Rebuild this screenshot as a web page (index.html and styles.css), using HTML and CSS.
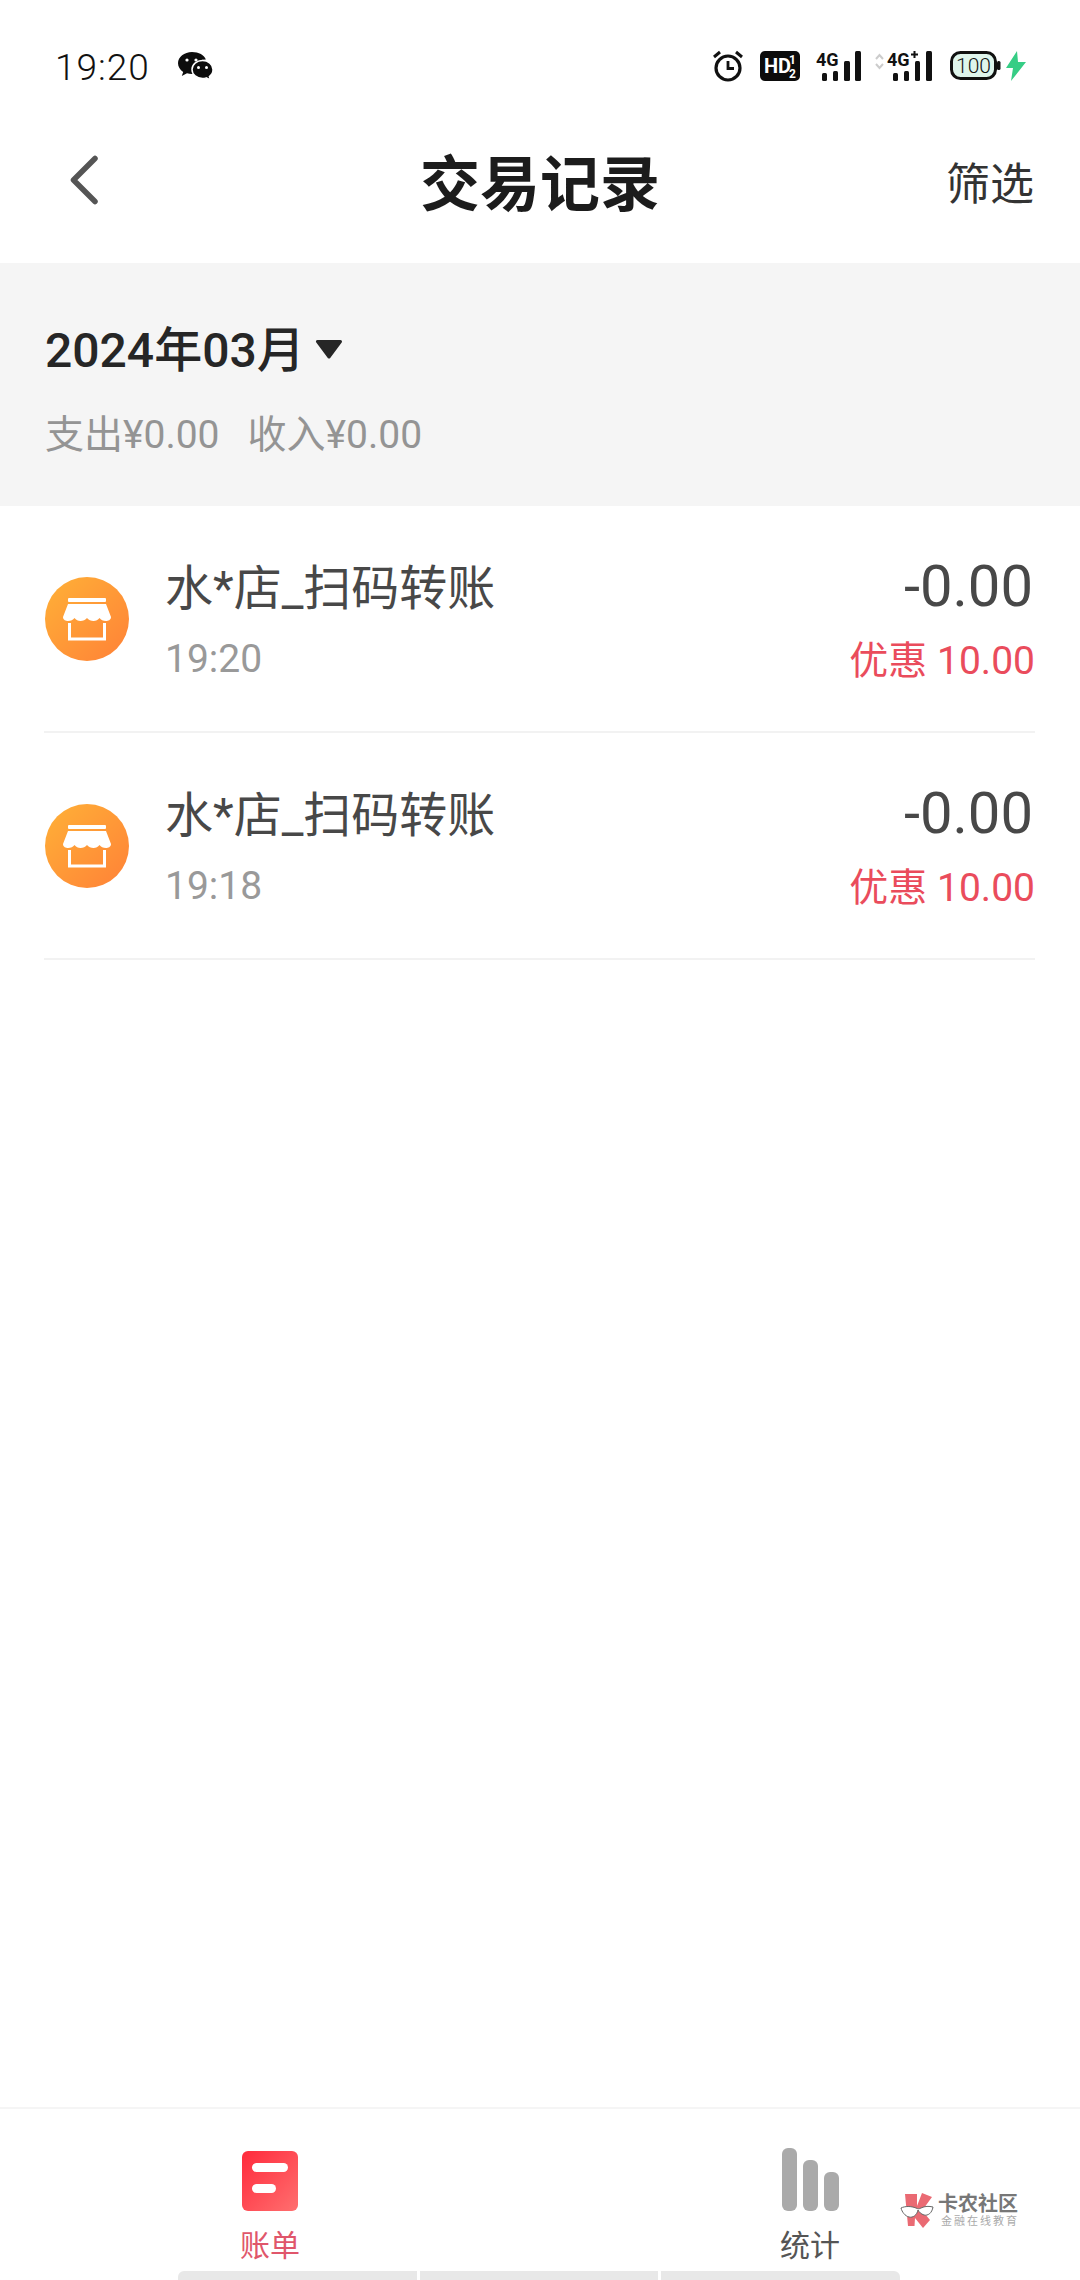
FILE: index.html
```html
<!DOCTYPE html>
<html lang="zh-CN">
<head>
  <meta charset="UTF-8">
  <meta name="viewport" content="width=device-width, initial-scale=1.0">
  <title>交易记录</title>
  <link rel="stylesheet" href="styles.css">
</head>
<body>
  <div class="page">
    <div class="status-bar">
      <div class="status-left">
        <span class="clock">19:20</span>
        <svg class="wechat" width="35" height="28" viewBox="0 0 35 28">
          <path d="M14 0C6.3 0 0 5 0 11.2c0 3.5 2 6.600 5.200 8.700L3.800 24l5.200-2.700c1.600.4 3.300.6 5 .6.500 0 1 0 1.500-.1-.4-1.200-.6-2.400-.6-3.700 0-5.900 5.500-10.600 12.200-10.600h.8C26.400 3 20.700 0 14 0z"/>
          <path d="M35 17.500c0-5-4.700-9-10.500-9S14 12.500 14 17.500s4.700 9 10.500 9c1.300 0 2.500-.2 3.700-.6l4.300 2.100-1.100-3.500c2.200-1.600 3.600-4 3.600-6.500z" stroke="#fff" stroke-width="1.500"/>
          <circle cx="9" cy="8" r="1.600" fill="#fff"/><circle cx="18" cy="8" r="1.600" fill="#fff"/>
          <circle cx="20.500" cy="15.500" r="1.500" fill="#fff"/><circle cx="28.500" cy="15.500" r="1.500" fill="#fff"/>
        </svg>
      </div>
      <div class="status-right">
        <svg class="alarm" width="32" height="32" viewBox="0 0 32 32" fill="none" stroke="#111">
          <circle cx="16" cy="18" r="12" stroke-width="3.200"/>
          <path d="M16 11v7.500h6" stroke-width="2.800"/>
          <path d="M2 7l6-5M30 7l-6-5" stroke-width="3"/>
        </svg>
        <svg width="40" height="30" viewBox="0 0 40 30">
          <rect width="40" height="30" rx="5" fill="#0c0c0c"/>
          <text x="4" y="22" class="hd-text">HD</text>
          <text x="29" y="13" class="hd-frac">1</text>
          <text x="29" y="27" class="hd-frac">2</text>
        </svg>
        <svg class="signal" width="46" height="34" viewBox="0 -4 46 34">
          <text x="0" y="15" class="net-text">4G</text>
          <rect x="6" y="22" width="5" height="8" rx="1.500"/><rect x="17" y="20" width="5" height="10" rx="1.500"/>
          <rect x="28" y="10" width="6" height="20" rx="1.500"/><rect x="39" y="0" width="6" height="30" rx="1.500"/>
        </svg>
        <svg class="signal signal-plus" width="58" height="34" viewBox="0 -4 58 34">
          <path d="M2 8l3.500-4 3.500 4M2 13l3.500 4 3.500-4" fill="none" stroke="#ccc" stroke-width="2"/>
          <text x="13" y="15" class="net-text">4G</text>
          <path d="M40.500 0v7M37 3.500h7" stroke="#111" stroke-width="2"/>
          <rect x="19" y="22" width="5" height="8" rx="1.500"/><rect x="30" y="20" width="5" height="10" rx="1.500"/>
          <rect x="41" y="10" width="5" height="20" rx="1.500"/><rect x="52" y="0" width="6" height="30" rx="1.500"/>
        </svg>
        <div class="battery-group">
          <svg width="51" height="30" viewBox="0 0 51 30">
            <rect x="1.500" y="1.500" width="44" height="26" rx="9" fill="#dff5ec" stroke="#111" stroke-width="3"/>
            <rect x="47" y="10" width="3.500" height="9" rx="1.500" fill="#111"/>
            <text x="23.500" y="22" class="batt-text">100</text>
          </svg>
          <svg width="20" height="30" viewBox="0 0 20 30">
            <path d="M11 0L0 17h7l-2 13L20 11h-8z" fill="#36cd85"/>
          </svg>
        </div>
      </div>
    </div>

    <header class="nav">
      <svg class="back" width="34" height="54" viewBox="0 0 34 54" fill="none">
        <path d="M27 5.500L5.500 27 27 48.500" stroke="#555" stroke-width="5.500" stroke-linecap="round" stroke-linejoin="round"/>
      </svg>
      <h1 class="nav-title">交易记录</h1>
      <span class="nav-action">筛选</span>
    </header>

    <section class="summary">
      <div class="month">2024年03月<svg class="month-caret" width="28" height="19" viewBox="0 0 28 19"><path d="M2.500 1.500h23L14 17z" fill="#262626" stroke="#262626" stroke-width="3" stroke-linejoin="round"/></svg></div>
      <div class="totals"><span>支出¥0.00</span><span>收入¥0.00</span></div>
    </section>

    <main class="list">
      <div class="row">
        <svg class="store" width="84" height="84" viewBox="0 0 84 84">
          <defs>
            <linearGradient id="storeBg" x1="0" y1="0" x2="1" y2="1">
              <stop offset="0" stop-color="#ffb137"/>
              <stop offset="1" stop-color="#ff8137"/>
            </linearGradient>
          </defs>
          <circle cx="42" cy="42" r="42" fill="url(#storeBg)"/>
          <rect x="23" y="21" width="38" height="4" rx="1" fill="#fff"/>
          <path d="M23 27h38l5 13c0 3-3 4-5 4-3 0-5-1-6.500-3-1.500 2-3.500 3-6 3s-5-1-6.500-3c-1.500 2-4 3-6.500 3s-4.500-1-6-3c-1.500 2-3.500 3-6.500 3-2 0-5-1-5-4z" fill="#fff"/>
          <path d="M24.500 46v16h35V46" fill="none" stroke="#fff" stroke-width="3"/>
        </svg>
        <div class="row-main">
          <div class="row-name">水*店_扫码转账</div>
          <div class="row-time">19:20</div>
        </div>
        <div class="row-side">
          <div class="row-amount">-0.00</div>
          <div class="row-discount">优惠 10.00</div>
        </div>
      </div>
      <div class="row">
        <svg class="store" width="84" height="84" viewBox="0 0 84 84">
          <circle cx="42" cy="42" r="42" fill="url(#storeBg)"/>
          <rect x="23" y="21" width="38" height="4" rx="1" fill="#fff"/>
          <path d="M23 27h38l5 13c0 3-3 4-5 4-3 0-5-1-6.500-3-1.500 2-3.500 3-6 3s-5-1-6.500-3c-1.500 2-4 3-6.500 3s-4.500-1-6-3c-1.500 2-3.500 3-6.500 3-2 0-5-1-5-4z" fill="#fff"/>
          <path d="M24.500 46v16h35V46" fill="none" stroke="#fff" stroke-width="3"/>
        </svg>
        <div class="row-main">
          <div class="row-name">水*店_扫码转账</div>
          <div class="row-time">19:18</div>
        </div>
        <div class="row-side">
          <div class="row-amount">-0.00</div>
          <div class="row-discount">优惠 10.00</div>
        </div>
      </div>
    </main>

    <footer class="tabbar">
      <div class="tabs">
        <div class="tab tab-active">
          <svg width="56" height="60" viewBox="0 0 56 60">
            <defs>
              <linearGradient id="billBg" x1="0" y1="0" x2="1" y2="1">
                <stop offset="0" stop-color="#ff2a3c"/>
                <stop offset="1" stop-color="#ff6f6f"/>
              </linearGradient>
            </defs>
            <rect width="56" height="60" rx="6" fill="url(#billBg)"/>
            <rect x="10" y="12" width="36" height="9" rx="4.500" fill="#fff"/>
            <rect x="10" y="33" width="24" height="9" rx="4.500" fill="#fff"/>
          </svg>
          <span class="tab-label">账单</span>
        </div>
        <div class="tab">
          <svg class="stats-icon" width="58" height="63" viewBox="0 0 58 63">
            <rect x="0" y="0" width="15" height="63" rx="6" fill="#aaa"/>
            <rect x="21" y="12" width="15" height="51" rx="6" fill="#aaa"/>
            <rect x="42" y="24" width="15" height="39" rx="6" fill="#aaa"/>
          </svg>
          <span class="tab-label">统计</span>
        </div>
      </div>
      <div class="home-bar"><i></i><i></i><i></i></div>
      <div class="watermark">
        <svg width="34" height="36" viewBox="0 0 34 36">
          <path d="M5 1h12v12L22 0l10 4-8 11 1 6 5 6-7 8-8-10-.5 8H8z" fill="#ea6a73"/>
          <path d="M1 15c4-2 10-2 15 0 2 1 3 1 5 0 4-2 8-2 12-1-1 6-5 9-9 8-3-1-5-3-6-5-1 5-5 8-9 7-4-1-7-5-8-9z" fill="#fff" stroke="#666" stroke-width="1"/>
        </svg>
        <div class="watermark-text">
          <div class="watermark-name">卡农社区</div>
          <div class="watermark-sub">金融在线教育</div>
        </div>
      </div>
    </footer>
  </div>
</body>
</html>
```

FILE: styles.css
```css
* {
  box-sizing: border-box;
}
body {
  margin: 0;
  background-color: #fff;
  font-family: Roboto, "Noto Sans CJK SC", sans-serif;
}
.page {
  width: 1080px;
  height: 2280px;
  display: flex;
  flex-direction: column;
  overflow: hidden;
}

/* status bar */
.status-bar {
  height: 100px;
  padding: 45px 54px 0 55px;
  display: flex;
  justify-content: space-between;
  align-items: flex-start;
  flex-shrink: 0;
}
.status-left {
  display: flex;
  align-items: center;
  gap: 28px;
  height: 44px;
}
.clock {
  font-size: 37px;
  font-weight: 300;
  color: #111;
  letter-spacing: 1px;
}
.wechat {
  fill: #0c0c0c;
  margin-top: -2px;
}
.status-right {
  display: flex;
  align-items: flex-end;
  gap: 16px;
  padding-top: 2px;
}
.alarm {
  margin-bottom: -1px;
}
.signal {
  fill: #111;
}
.signal-plus {
  margin-left: -4px;
}
.net-text {
  font-size: 18px;
  font-weight: 700;
  fill: #111;
  font-family: Roboto, sans-serif;
}
.hd-text {
  font-size: 20px;
  font-weight: 700;
  fill: #fff;
  font-family: Roboto, sans-serif;
}
.hd-frac {
  font-size: 12px;
  font-weight: 700;
  fill: #fff;
  font-family: Roboto, sans-serif;
}
.batt-text {
  font-size: 21px;
  font-weight: 300;
  fill: #111;
  text-anchor: middle;
  font-family: Roboto, sans-serif;
}
.battery-group {
  display: flex;
  align-items: center;
  gap: 5px;
  margin-left: 2px;
}

/* nav */
.nav {
  height: 163px;
  padding: 0 46px 0 68px;
  display: flex;
  align-items: center;
  justify-content: space-between;
  position: relative;
  flex-shrink: 0;
}
.back {
  margin-top: -3px;
}
.nav-title {
  position: absolute;
  left: 0;
  right: 0;
  top: 48px;
  margin: 0;
  text-align: center;
  font-size: 60px;
  font-weight: 700;
  line-height: 76px;
  color: #1c1c1c;
}
.nav-action {
  font-size: 44px;
  color: #333;
  margin-top: -2px;
}

/* month summary */
.summary {
  height: 243px;
  padding: 55px 45px 0;
  background-color: #f5f5f5;
  flex-shrink: 0;
}
.month {
  font-size: 48px;
  font-weight: 500;
  line-height: 66px;
  color: #262626;
  display: flex;
  align-items: center;
}
.month-caret {
  margin: -4px 0 0 10px;
}
.totals {
  margin-top: 26px;
  display: flex;
  gap: 28px;
  font-size: 39px;
  line-height: 50px;
  color: #949494;
}

/* list */
.list {
  flex: 1;
  padding: 0 45px 0 44px;
}
.row {
  height: 227px;
  display: flex;
  align-items: center;
  border-bottom: 2px solid #f2f2f2;
}
.store {
  flex-shrink: 0;
  margin: 0 0 0 1px;
}
.row-main {
  flex: 1;
  margin-left: 36px;
}
.row-name {
  font-size: 48px;
  line-height: 64px;
  color: #484848;
}
.row-time {
  margin-top: 16px;
  font-size: 39px;
  line-height: 44px;
  color: #999;
}
.row-side {
  text-align: right;
  margin-top: -2px;
}
.row-amount {
  font-size: 58px;
  line-height: 66px;
  color: #484848;
  padding-right: 2px;
}
.row-discount {
  margin-top: 20px;
  font-size: 39px;
  line-height: 44px;
  color: #ea4c5c;
}

/* bottom tabs */
.tabbar {
  position: relative;
  height: 173px;
  border-top: 2px solid #f5f5f5;
  flex-shrink: 0;
  display: flex;
  flex-direction: column;
}
.tabs {
  flex: 1;
  display: flex;
}
.tab {
  flex: 1;
  height: 100%;
  display: flex;
  flex-direction: column;
  align-items: center;
  justify-content: flex-end;
  gap: 17px;
}
.stats-icon {
  margin-left: 2px;
}
.tab-label {
  font-size: 30px;
  line-height: 36px;
  color: #555;
}
.tab-active .tab-label {
  color: #e0566b;
}
.home-bar {
  height: 9px;
  margin-top: 7px;
  padding: 0 180px 0 178px;
  display: flex;
  gap: 3px;
}
.home-bar i {
  flex: 1;
  background-color: #e8e8e8;
}
.home-bar i:first-child {
  border-radius: 6px 0 0 0;
}
.home-bar i:last-child {
  border-radius: 0 6px 0 0;
}
.watermark {
  position: absolute;
  left: 900px;
  top: 84px;
  display: flex;
  align-items: center;
  gap: 4px;
}
.watermark-name {
  font-size: 20px;
  font-weight: 700;
  line-height: 22px;
  color: #777;
}
.watermark-sub {
  font-size: 11px;
  line-height: 14px;
  letter-spacing: 2px;
  color: #aaa;
  margin-left: 3px;
}
```
